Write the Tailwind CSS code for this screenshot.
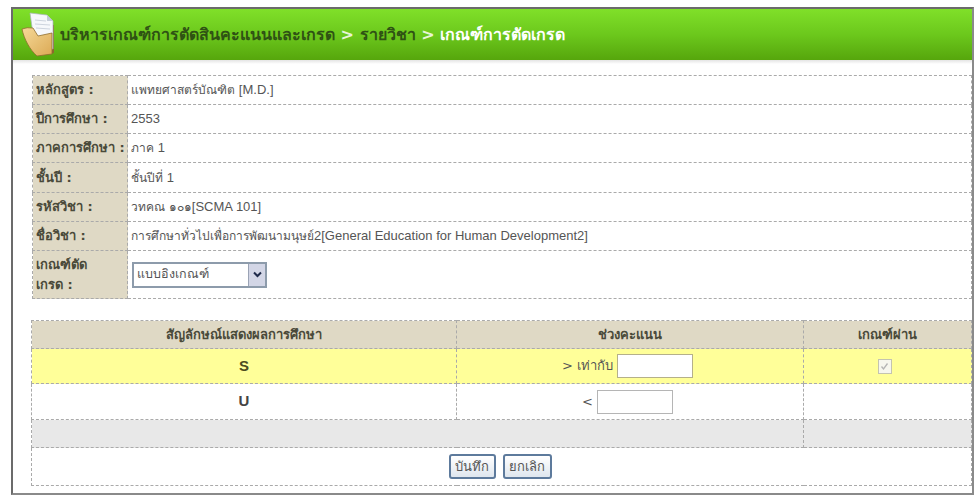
<!DOCTYPE html>
<html lang="th">
<head>
    <meta charset="UTF-8" />
    <title>เกณฑ์การตัดเกรด</title>
    <script src="https://cdn.jsdelivr.net/npm/@tailwindcss/browser@4"></script>
</head>
<body class="bg-white font-['Tahoma','DejaVu_Sans','Noto_Sans',sans-serif] text-[12px] text-[#555]">

<div class="w-[977px] h-[501px] pt-[7px] pl-[11px]">
  <div class="w-[963px] h-[488px] border-2 border-[#6b6b6b] border-b-[#8a8a8a] border-r-[#8a8a8a]">

    <!-- header -->
    <div class="h-[51px] flex items-center pl-[8px] gap-[5px] bg-gradient-to-b from-[#80e029] via-[#6cc81c] to-[#56a60c]">
      <svg width="34" height="45" viewBox="0 0 34 45" class="shrink-0">
        <defs>
          <linearGradient id="folder" x1="0" y1="0" x2="1" y2="1">
            <stop offset="0" stop-color="#f6d998" />
            <stop offset="1" stop-color="#dba955" />
          </linearGradient>
        </defs>
        <path d="M14 15 L33 13 L33 41 L24 43 Z" fill="#8a6a2c" />
        <path d="M9 1 L26 3 L32 9 L32 37 L14 36 Z" fill="#f6f8fb" stroke="#a9b3bf" stroke-width="0.7" />
        <path d="M26 3 L26 9 L32 9 Z" fill="#c3ccd8" />
        <path d="M14 8 L25 9 M14 12 L29 13 M15 16 L29 17" stroke="#cdd4de" stroke-width="1" />
        <path d="M1 17 Q6 15 12 16 L17 24 L31 21 L31 42 L16 44 C9 38 3 27 1 17 Z" fill="url(#folder)" stroke="#8f6d2e" stroke-width="0.8" />
      </svg>
      <h1 class="text-[16px] font-bold text-[#2f5214] whitespace-nowrap">บริหารเกณฑ์การตัดสินคะแนนและเกรด <span class="text-[#e8f5d8]">&gt;</span> รายวิชา <span class="text-[#e8f5d8]">&gt;</span> <span class="text-white">เกณฑ์การตัดเกรด</span></h1>
    </div>
    <div class="h-[4px] bg-gradient-to-b from-[#e4e4e4] to-white"></div>

    <div class="pt-[11px] pl-[19px]">
      <!-- course info -->
      <table class="w-[940px] border-collapse table-fixed">
        <colgroup><col class="w-[95px]" /><col /></colgroup>
        <tbody>
          <tr class="h-[29px]">
            <th class="border border-dashed border-[#aaa] bg-[#dfd9c5] text-left font-bold text-[13px] text-[#4a4a3a] px-[3px]">หลักสูตร :</th>
            <td class="border border-dashed border-[#aaa] px-[3px]">แพทยศาสตร์บัณฑิต <span class="font-['Liberation_Sans'] text-[13px]">[M.D.]</span></td>
          </tr>
          <tr class="h-[29px]">
            <th class="border border-dashed border-[#aaa] bg-[#dfd9c5] text-left font-bold text-[13px] text-[#4a4a3a] px-[3px]">ปีการศึกษา :</th>
            <td class="border border-dashed border-[#aaa] px-[3px]"><span class="font-['Liberation_Sans'] text-[13px]">2553</span></td>
          </tr>
          <tr class="h-[29px]">
            <th class="border border-dashed border-[#aaa] bg-[#dfd9c5] text-left font-bold text-[13px] text-[#4a4a3a] px-[3px] whitespace-nowrap">ภาคการศึกษา :</th>
            <td class="border border-dashed border-[#aaa] px-[3px]">ภาค <span class="font-['Liberation_Sans'] text-[13px]">1</span></td>
          </tr>
          <tr class="h-[30px]">
            <th class="border border-dashed border-[#aaa] bg-[#dfd9c5] text-left font-bold text-[13px] text-[#4a4a3a] px-[3px]">ชั้นปี :</th>
            <td class="border border-dashed border-[#aaa] px-[3px]">ชั้นปีที่ <span class="font-['Liberation_Sans'] text-[13px]">1</span></td>
          </tr>
          <tr class="h-[29px]">
            <th class="border border-dashed border-[#aaa] bg-[#dfd9c5] text-left font-bold text-[13px] text-[#4a4a3a] px-[3px]">รหัสวิชา :</th>
            <td class="border border-dashed border-[#aaa] px-[3px]">วทคณ ๑๐๑<span class="font-['Liberation_Sans'] text-[13px]">[SCMA 101]</span></td>
          </tr>
          <tr class="h-[29px]">
            <th class="border border-dashed border-[#aaa] bg-[#dfd9c5] text-left font-bold text-[13px] text-[#4a4a3a] px-[3px]">ชื่อวิชา :</th>
            <td class="border border-dashed border-[#aaa] px-[3px]">การศึกษาทั่วไปเพื่อการพัฒนามนุษย์<span class="font-['Liberation_Sans'] text-[13px]">2[General Education for Human Development2]</span></td>
          </tr>
          <tr class="h-[48px]">
            <th class="border border-dashed border-[#aaa] bg-[#dfd9c5] text-left font-bold text-[13px] leading-[20px] text-[#4a4a3a] px-[3px]">เกณฑ์ตัด<br />เกรด :</th>
            <td class="border border-dashed border-[#aaa] px-[3px]">
              <div class="ml-[1px] w-[135px] h-[26px] flex items-center justify-between border-2 border-[#8d9bab] bg-white pl-[3px]">
                <span class="text-[12.5px]">แบบอิงเกณฑ์</span>
                <span class="w-[17px] h-full bg-[#d3d6e6] border-l border-[#9aa3b5] flex items-center justify-center">
                  <svg width="9" height="7" viewBox="0 0 9 7"><path d="M1 1.5 L4.5 5 L8 1.5" fill="none" stroke="#1f2a4a" stroke-width="2" /></svg>
                </span>
              </div>
            </td>
          </tr>
        </tbody>
      </table>

      <!-- grade table -->
      <table class="mt-[21px] -ml-px w-[941px] border-collapse table-fixed">
        <colgroup><col class="w-[425px]" /><col class="w-[347px]" /><col /></colgroup>
        <thead>
          <tr class="h-[28px] bg-[#dfd9c5] text-[13px] font-bold text-[#4a4a3a]">
            <th class="border border-dashed border-[#aaa]">สัญลักษณ์แสดงผลการศึกษา</th>
            <th class="border border-dashed border-[#aaa]">ช่วงคะแนน</th>
            <th class="border border-dashed border-[#aaa]">เกณฑ์ผ่าน</th>
          </tr>
        </thead>
        <tbody>
          <tr class="h-[35px] bg-[#ffff99]">
            <td class="border border-dashed border-[#aaa] text-center font-['Liberation_Sans'] font-bold text-[15px] text-[#4c4c20]">S</td>
            <td class="border border-dashed border-[#aaa]">
              <div class="flex items-center justify-center gap-[4px] pr-[5px]">
                <span class="text-[13px]">&gt; เท่ากับ</span>
                <span class="block w-[76px] h-[24px] border border-[#b5b08a] bg-white"></span>
              </div>
            </td>
            <td class="border border-dashed border-[#aaa] pr-[6px]">
              <span class="mx-auto flex w-[14px] h-[15px] items-center justify-center border border-[#c4c4b0] bg-[#f6f6ee]">
                <svg width="9" height="9" viewBox="0 0 9 9"><path d="M1.5 4.5 L3.5 7 L7.5 1.5" fill="none" stroke="#b4b4b4" stroke-width="1.3" /></svg>
              </span>
            </td>
          </tr>
          <tr class="h-[36px]">
            <td class="border border-dashed border-[#aaa] text-center font-['Liberation_Sans'] font-bold text-[15px] text-[#444]">U</td>
            <td class="border border-dashed border-[#aaa]">
              <div class="flex items-center justify-center gap-[4px] pr-[5px]">
                <span class="text-[13px]">&lt;</span>
                <span class="block w-[76px] h-[24px] border border-[#b5b5b5] bg-white"></span>
              </div>
            </td>
            <td class="border border-dashed border-[#aaa]"></td>
          </tr>
          <tr class="h-[28px] bg-[#e8e8e8]">
            <td colspan="2" class="border border-dashed border-[#aaa]"></td>
            <td class="border border-dashed border-[#aaa]"></td>
          </tr>
          <tr class="h-[38px]">
            <td colspan="3" class="border border-dashed border-[#aaa] text-center">
              <div class="flex justify-center gap-[7px] pr-[3px]">
                <button class="h-[25px] w-[47px] rounded-[3px] border-2 border-[#5d7a9c] bg-gradient-to-b from-white to-[#dfe6ee] text-[13px] text-[#555]">บันทึก</button>
                <button class="h-[25px] w-[49px] rounded-[3px] border-2 border-[#5d7a9c] bg-gradient-to-b from-white to-[#dfe6ee] text-[13px] text-[#555]">ยกเลิก</button>
              </div>
            </td>
          </tr>
        </tbody>
      </table>
    </div>
  </div>
</div>

</body>
</html>
